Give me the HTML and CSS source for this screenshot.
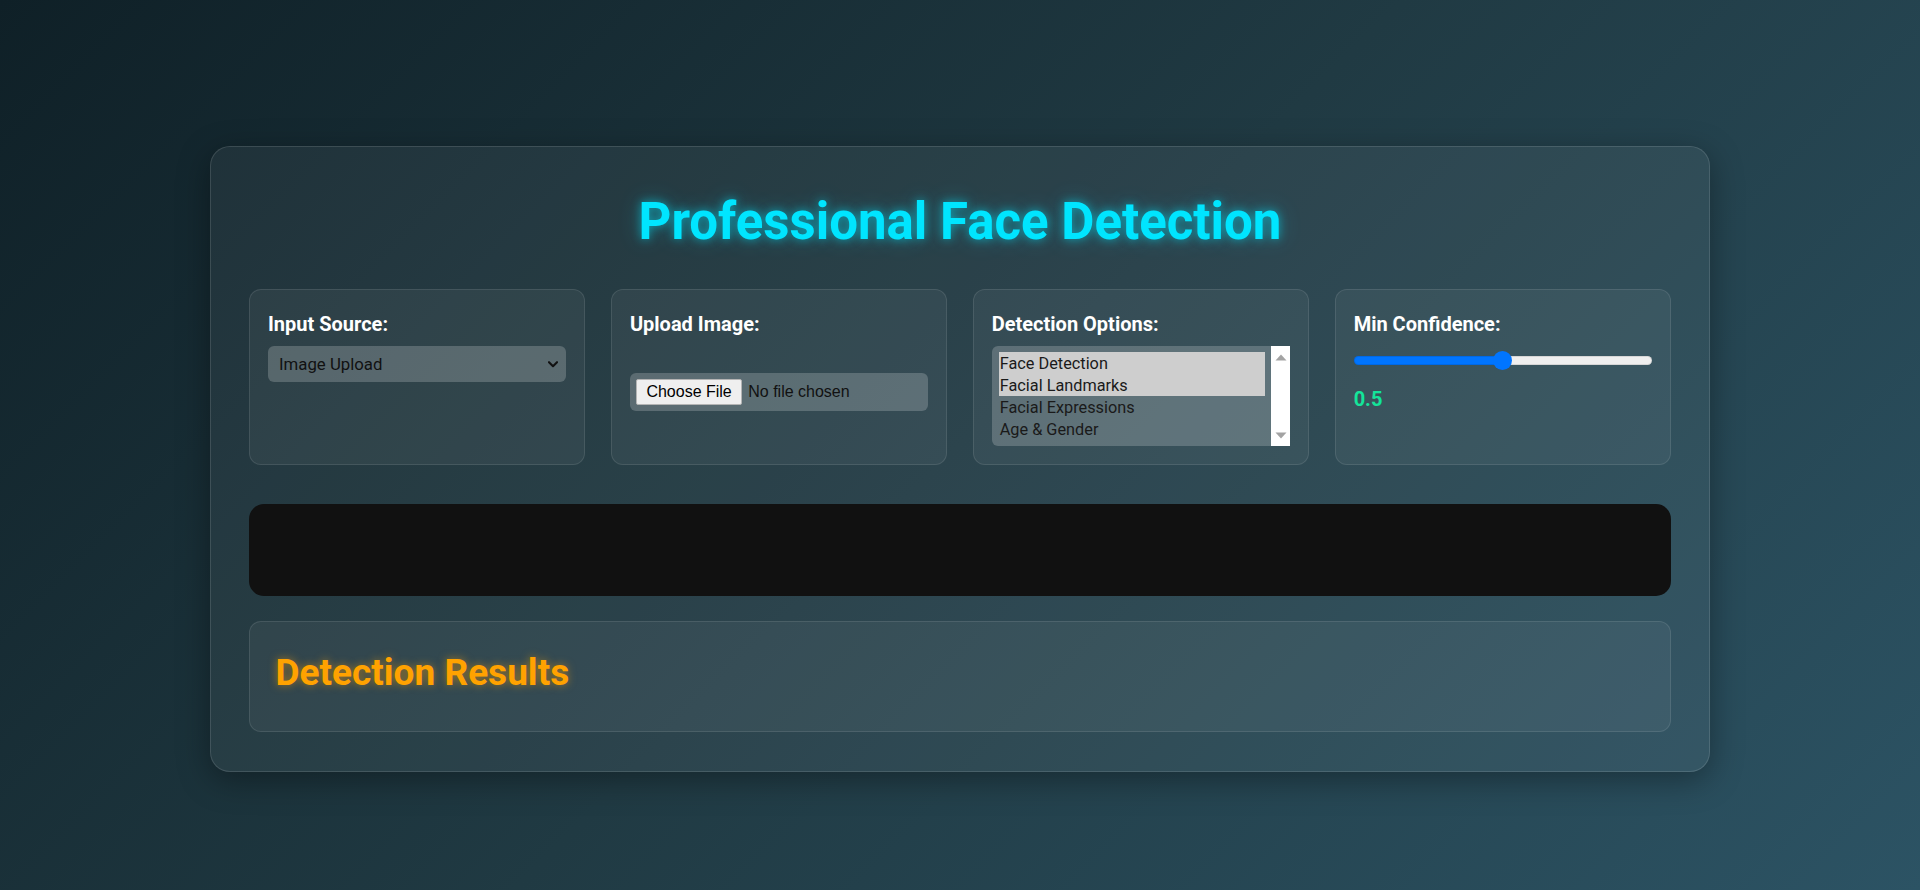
FILE: index.html
```html
<!DOCTYPE html>
<html lang="en">
<head>
<meta charset="utf-8">
<title>Professional Face Detection</title>
<link rel="stylesheet" href="styles.css">
</head>
<body>
<main class="app">
  <h1 class="app-title">Professional Face Detection</h1>

  <section class="controls">
    <div class="control">
      <label class="control-label" for="source">Input Source:</label>
      <div class="select-wrap">
        <select id="source" class="select">
          <option>Image Upload</option>
          <option>Webcam</option>
        </select>
        <svg class="select-chevron" width="10" height="7" viewBox="0 0 10 7" aria-hidden="true"><path d="M1 1.2 L5 5.2 L9 1.2" fill="none" stroke="#111" stroke-width="2.1" stroke-linecap="round" stroke-linejoin="round"/></svg>
      </div>
    </div>

    <div class="control">
      <label class="control-label" for="upload">Upload Image:</label>
      <input id="upload" class="file-input" type="file" accept="image/*">
    </div>

    <div class="control">
      <label class="control-label">Detection Options:</label>
      <div class="listbox" role="listbox" aria-multiselectable="true">
        <div class="listbox-options">
          <div class="listbox-option is-selected" role="option" aria-selected="true">Face Detection</div>
          <div class="listbox-option is-selected" role="option" aria-selected="true">Facial Landmarks</div>
          <div class="listbox-option" role="option">Facial Expressions</div>
          <div class="listbox-option" role="option">Age &amp; Gender</div>
        </div>
        <div class="listbox-scrollbar" aria-hidden="true">
          <svg width="12" height="7" viewBox="0 0 12 7"><polygon points="6,0.5 11.5,6.5 0.5,6.5" fill="#a3a3a3"/></svg>
          <svg width="12" height="7" viewBox="0 0 12 7"><polygon points="0.5,0.5 11.5,0.5 6,6.5" fill="#a3a3a3"/></svg>
        </div>
      </div>
    </div>

    <div class="control">
      <label class="control-label" for="confidence">Min Confidence:</label>
      <input id="confidence" class="range" type="range" min="0" max="1" step="0.1" value="0.5">
      <span class="range-value">0.5</span>
    </div>
  </section>

  <canvas class="preview"></canvas>

  <section class="results">
    <h2 class="results-title">Detection Results</h2>
  </section>
</main>
</body>
</html>
```

FILE: styles.css
```css
* { box-sizing: border-box; }

html, body { height: 100%; }

body {
  margin: 0;
  padding-top: 146px;
  background: linear-gradient(135deg, #0f2027 0%, #203a43 50%, #2c5364 100%);
  font-family: Roboto, "Noto Sans", sans-serif;
  color: #fff;
  overflow: hidden;
}

.app {
  width: 1500px;
  margin: 0 auto;
  padding: 38px 38px 39px;
  background: rgba(255, 255, 255, 0.055);
  border: 1px solid rgba(255, 255, 255, 0.12);
  border-radius: 20px;
  box-shadow: 0 8px 32px rgba(0, 0, 0, 0.35);
}

.app-title {
  margin: 6px 0 37px;
  height: 61px;
  font-size: 51px;
  line-height: 61px;
  font-weight: 700;
  text-align: center;
  color: #00e5ff;
  text-shadow: 0 0 10px rgba(0, 229, 255, 0.55), 0 0 22px rgba(0, 229, 255, 0.3);
}

.controls {
  display: grid;
  grid-template-columns: repeat(4, 1fr);
  gap: 25.5px;
}

.control {
  padding: 20px 18px 18px;
  background: rgba(255, 255, 255, 0.05);
  border: 1px solid rgba(255, 255, 255, 0.1);
  border-radius: 12px;
}

.control-label {
  display: block;
  margin-bottom: 8px;
  font-size: 20px;
  line-height: 28px;
  font-weight: 700;
  color: #fff;
}

.select-wrap {
  position: relative;
}

.select {
  -webkit-appearance: none;
  appearance: none;
  display: block;
  width: 100%;
  height: 36px;
  margin: 0;
  padding: 0 30px 0 11px;
  border: none;
  border-radius: 6px;
  background: rgba(255, 255, 255, 0.2);
  font-family: Roboto, "Noto Sans", sans-serif;
  font-size: 16.8px;
  color: #111;
}

.select-chevron {
  position: absolute;
  right: 8px;
  top: 15px;
}

.file-input {
  display: block;
  width: 100%;
  margin-top: 35px;
  padding: 6px;
  border: none;
  border-radius: 6px;
  background: rgba(255, 255, 255, 0.2);
  font-family: "Liberation Sans", Arial, sans-serif;
  font-size: 16px;
  color: #111;
}

.file-input::file-selector-button {
  margin-right: 6px;
  padding: 3px 9.5px;
  border: 1px solid #b4b4b4;
  border-radius: 2px;
  background: #efefef;
  font: inherit;
  color: #000;
}

.listbox {
  display: flex;
  height: 100px;
  border-radius: 6px 0 0 6px;
  background: rgba(255, 255, 255, 0.2);
  overflow: hidden;
}

.listbox-options {
  flex: 1;
  padding: 6px 6px 6px 7px;
}

.listbox-option {
  height: 22px;
  padding: 1px 0 0 1px;
  font-size: 16.3px;
  line-height: 21px;
  color: #1a1a1a;
  white-space: nowrap;
}

.listbox-option.is-selected {
  background: #cecece;
}

.listbox-scrollbar {
  width: 19px;
  display: flex;
  flex-direction: column;
  justify-content: space-between;
  align-items: center;
  padding: 8px 0 7px;
  background: #fff;
}

.listbox-scrollbar svg { display: block; }

.range {
  -webkit-appearance: none;
  appearance: none;
  display: block;
  width: 100%;
  height: 19px;
  margin: 12.5px 0 0;
  background: transparent;
}

.range::-webkit-slider-runnable-track {
  height: 9px;
  border-radius: 4.5px;
  background: linear-gradient(to right, #0075ff 0 50%, #efefef 50% 100%);
  box-shadow: inset 0 0 0 1px rgba(0, 0, 0, 0.1);
}

.range::-webkit-slider-thumb {
  -webkit-appearance: none;
  width: 19px;
  height: 19px;
  margin-top: -5px;
  border-radius: 50%;
  background: #0075ff;
  border: none;
}

.range-value {
  display: block;
  margin-top: 17px;
  font-size: 20px;
  font-weight: 700;
  color: #14e59a;
}

.preview {
  display: block;
  width: 100%;
  height: 92px;
  margin-top: 39px;
  background: #111;
  border-radius: 15px;
}

.results {
  margin-top: 25px;
  padding: 24px 23px 24px 25.5px;
  background: rgba(255, 255, 255, 0.05);
  border: 1px solid rgba(255, 255, 255, 0.1);
  border-radius: 12px;
}

.results-title {
  margin: 5px 0 12px;
  font-size: 37px;
  line-height: 44.4px;
  font-weight: 700;
  color: #ffa200;
  text-shadow: 0 0 8px rgba(255, 162, 0, 0.55);
}
```
